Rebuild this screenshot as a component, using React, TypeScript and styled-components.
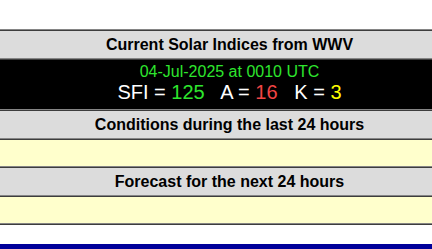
import { createGlobalStyle } from 'styled-components'
import styled from 'styled-components'

const GlobalStyle = createGlobalStyle`
  html, body {
    margin: 0;
    padding: 0;
    background: #fff;
    overflow: hidden;
  }
  body {
    font-family: "Liberation Sans", Arial, sans-serif;
  }
`

const Page = styled.div`
  padding-top: 29px;
`

const Panel = styled.div`
  display: flex;
  flex-direction: column;
`

const Rule = styled.div`
  height: 0;
  border-top: 1px solid #858585;
  border-bottom: 1px solid #3d3d3d;
`

const TitleRow = styled.div`
  height: 27px;
  padding-left: 27px;
  display: flex;
  align-items: center;
  justify-content: center;
  background: #dcdcdc;
  color: #000;
  font-weight: bold;
  font-size: 16px;
`

const DataRow = styled.div`
  height: 26px;
  background: #ffffcc;
`

const IndexBox = styled.div`
  height: 49px;
  box-sizing: border-box;
  padding: 3px 0 0 27px;
  background: #000;
  display: flex;
  flex-direction: column;
  align-items: center;
`

const Stamp = styled.div`
  color: #2ee62e;
  font-size: 16px;
  line-height: 18px;
`

const Values = styled.div`
  color: #fff;
  font-size: 20px;
  line-height: 23px;
  white-space: pre;
`

const Num = styled.span<{ $c: string }>`
  color: ${p => p.$c};
`

const BottomBar = styled.div`
  margin-top: 19px;
  height: 8px;
  background: #000099;
`

export default function App() {
  return (
    <Page>
      <GlobalStyle />
      <Panel>
        <Rule />
        <TitleRow>Current Solar Indices from WWV</TitleRow>
        <Rule />
        <IndexBox>
          <Stamp>04-Jul-2025 at 0010 UTC</Stamp>
          <Values>
            SFI = <Num $c="#2ee62e">125</Num>{'   '}A = <Num $c="#f04545">16</Num>{'   '}K = <Num $c="#ffff00">3</Num>
          </Values>
        </IndexBox>
        <Rule />
        <TitleRow>Conditions during the last 24 hours</TitleRow>
        <Rule />
        <DataRow />
        <Rule />
        <TitleRow>Forecast for the next 24 hours</TitleRow>
        <Rule />
        <DataRow />
        <Rule />
      </Panel>
      <BottomBar />
    </Page>
  )
}
